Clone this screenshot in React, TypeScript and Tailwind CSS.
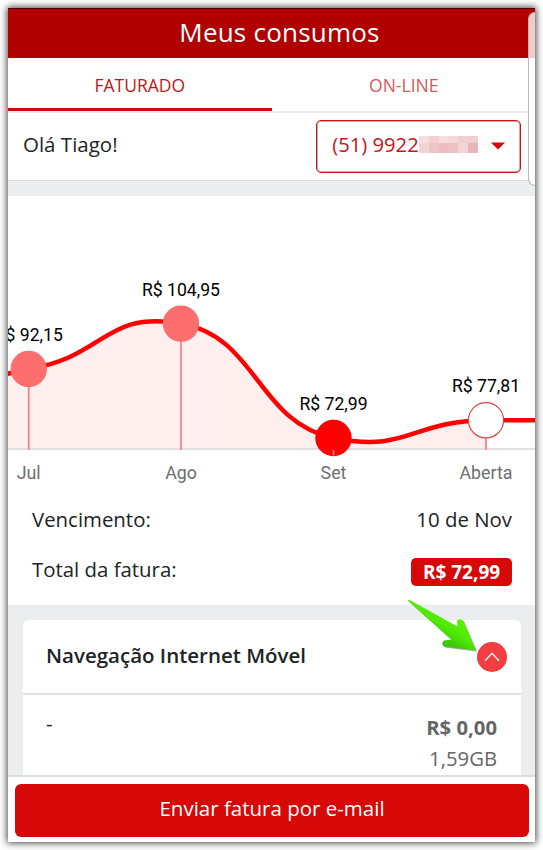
import clsx from 'clsx'

const BASELINE = 253

const points = [
  { month: 'Jul', label: 'R$ 92,15', x: 20.7, y: 173, fill: '#FF6E6E', stroke: '#FF6E6E' },
  { month: 'Ago', label: 'R$ 104,95', x: 173, y: 127.6, fill: '#FF6E6E', stroke: '#FF6E6E' },
  { month: 'Set', label: 'R$ 72,99', x: 325.5, y: 242, fill: '#FF0000', stroke: '#FF0000' },
  { month: 'Aberta', label: 'R$ 77,81', x: 478, y: 224.3, fill: '#FFFFFF', stroke: '#D94545' }
]

const curve =
  'M-40 183 C-20 182 0 178 20.7 173 C97 161 97 114 173 127.6 C249 140.5 249 226 325.5 242 C401.5 257 401.5 225 478 224.3'

// Tints of the cells that hide the end of the phone number
const maskColors = [
  'bg-[#f5dcdd]', 'bg-[#f2d0d1]', 'bg-[#f5dcdd]', 'bg-[#f3d6d7]', 'bg-[#f1cfd1]', 'bg-[#f1cdd0]',
  'bg-[#f3d4d6]', 'bg-[#efc4c7]', 'bg-[#edbcbf]', 'bg-[#edc0c3]', 'bg-[#f3d5d7]', 'bg-[#ebb4b6]'
]

function Header() {
  return (
    <header className="h-[50px] shrink-0 bg-[#b00000] border-t border-[#4a0000] flex items-center justify-center">
      <h1 className="text-[26px] leading-none text-white tracking-[0.22px] pl-4 pb-[3px]">Meus consumos</h1>
    </header>
  )
}

function Tab({ name, active }: { name: string; active?: boolean }) {
  return (
    <button
      className={clsx(
        'w-1/2 h-[53px] pt-1 text-[17.5px] border-b-[3px]',
        active ? 'text-[#c01818] border-[#cc0a0a]' : 'text-[#d45a5a] border-transparent pl-px'
      )}
    >
      {name}
    </button>
  )
}

function Tabs() {
  return (
    <nav className="h-[55px] shrink-0 flex border-b-2 border-[#eeeeee]">
      <Tab name="FATURADO" active />
      <Tab name="ON-LINE" />
    </nav>
  )
}

function Greeting() {
  return (
    <section className="h-[68px] shrink-0 pl-[15px] pr-[14px] flex items-center justify-between border-b border-[#dddddd]">
      <span className="text-[20.5px] pb-[4px]">Olá Tiago!</span>
      <button className="w-[205px] h-[53px] mb-px px-[15px] border border-[#c01818] shadow-[inset_0_0_0_1px_rgba(192,24,24,0.4)] rounded-[5px] flex items-center text-[20.2px] text-[#c01818]">
        <span className="pb-[3px] w-[87px] whitespace-nowrap">(51) 9922</span>
        <span className="grid grid-cols-6 grid-rows-[7px_10px] w-[59px] h-[17px] mb-[4px]">
          {maskColors.map((color, i) => (
            <span key={i} className={color} />
          ))}
        </span>
        <svg className="ml-auto" width="14" height="8" viewBox="0 0 14 8">
          <path d="M0 0.5H14L7 7.5Z" fill="#D60808" />
        </svg>
      </button>
    </section>
  )
}

function ConsumptionChart() {
  return (
    <svg className="block shrink-0" width="527" height="292" viewBox="0 0 527 292" fontFamily="Roboto">
      {/* Filled area and baseline */}
      <path d={`${curve} V${BASELINE} H-40 Z`} fill="#FFEFEE" />
      <path d={`M0 ${BASELINE}H527`} stroke="#E1DFDF" strokeWidth="2" />

      {/* Stems */}
      {points.map((p) => (
        <path key={p.month} d={`M${p.x} ${p.y}V254`} stroke="#F98080" strokeWidth="1.8" />
      ))}

      <path d={`${curve} H527`} fill="none" stroke="#FF0000" strokeWidth="4.5" />

      {/* Markers and labels */}
      {points.map((p) => (
        <g key={p.month} textAnchor="middle">
          <circle cx={p.x} cy={p.y} r="17.6" fill={p.fill} stroke={p.stroke} strokeWidth="1.2" />
          <text x={p.x} y={p.y - 28} fontSize="17.6" fill="#000000">{p.label}</text>
          <text x={p.x} y="283" fontSize="17.8" fill="#6E6E6E">{p.month}</text>
        </g>
      ))}
      <path d="M325.5 254V259.5" stroke="#FF8A8A" strokeWidth="1.6" />
    </svg>
  )
}

function Summary() {
  return (
    <section className="h-[117px] shrink-0 pl-[24px] pr-[23px] pt-[6px] text-[20.4px] leading-[50px]">
      <div className="flex justify-between h-[50px]">
        <span>Vencimento:</span>
        <span>10 de Nov</span>
      </div>
      <div className="flex justify-between items-center h-[50px]">
        <span>Total da fatura:</span>
        <span className="w-[101px] h-7 mt-[6px] rounded-[5px] bg-[#d60808] text-white text-center text-[19px] leading-[28px] font-bold">
          R$ 72,99
        </span>
      </div>
    </section>
  )
}

function DataCard() {
  return (
    <div className="h-[170px] shrink-0 bg-[#ecedef] pl-[15px] pr-[14px] pt-[15px]">
      <div className="relative h-[155px] bg-white rounded-t-[5px]">
        <div className="h-[75px] pl-[23px] pr-[14px] flex items-center justify-between border-b-2 border-[#e1e1e3]">
          <h2 className="text-[20.5px] font-semibold pb-[2px]">Navegação Internet Móvel</h2>
          <button className="size-[30px] rounded-full bg-[#f23d41] flex items-center justify-center">
            <svg width="16" height="10" viewBox="0 0 16 10" fill="none">
              <path d="M1 8.7L8 1.3L15 8.7" stroke="#FFFFFF" strokeWidth="1.3" />
            </svg>
          </button>
        </div>
        <div className="flex justify-between pl-[23px] pr-[24px] pt-[17px] text-[20.3px] leading-[31px]">
          <span className="-mt-[4px]">-</span>
          <div className="text-right text-[#666666]">
            <p className="font-bold">R$ 0,00</p>
            <p>1,59GB</p>
          </div>
        </div>

        {/* Pointer over the collapse button */}
        <svg className="absolute left-[382px] top-[-23px]" width="76" height="60" viewBox="0 0 76 60">
          <defs>
            <linearGradient id="arrow" x1="0.35" y1="0.65" x2="0.6" y2="0.35">
              <stop offset="0" stopColor="#3BC808" />
              <stop offset="0.55" stopColor="#4FE904" />
              <stop offset="1" stopColor="#58F205" />
            </linearGradient>
          </defs>
          <path
            d="M3.5 4.2C2.5 3 4 2.6 5.5 3.4L52.5 29.4L52 24.5C52 21.4 57 21.4 58.5 24.5L71 53.5L40.5 49.8C36 49 36.5 43.5 40.5 43.3L46.5 42.8Z"
            transform="translate(1 1)"
            fill="#85858A"
            opacity="0.75"
          />
          <path
            d="M3.5 4.2C2.5 3 4 2.6 5.5 3.4L52.5 29.4L52 24.5C52 21.4 57 21.4 58.5 24.5L71 53.5L40.5 49.8C36 49 36.5 43.5 40.5 43.3L46.5 42.8Z"
            fill="url(#arrow)"
          />
        </svg>
      </div>
    </div>
  )
}

function Footer() {
  return (
    <footer className="h-[67px] shrink-0 border-t-2 border-[#dcdddf] bg-white pt-[7px] pl-[7px] pr-[6px]">
      <button className="w-full h-[53px] pb-[4px] rounded-[6px] bg-[#d60808] text-[20.5px] text-white">
        Enviar fatura por e-mail
      </button>
    </footer>
  )
}

export default function App() {
  return (
    <div className="w-[543px] h-[850px] bg-white p-2 overflow-hidden">
      <main className="relative w-[527px] h-[834px] flex flex-col bg-white text-[#212325] font-['Open_Sans',sans-serif] shadow-[0_0_7px_1px_rgba(0,0,0,0.75)]">
        <Header />
        <Tabs />
        <Greeting />
        <div className="h-[15px] shrink-0 bg-[#ecedef]" />
        <ConsumptionChart />
        <Summary />
        <DataCard />
        <Footer />
        {/* Edge panel handle */}
        <div className="absolute right-0 top-[4px] w-[7px] h-[174px] rounded-l-[8px] border border-r-0 border-[#b9b9b9] bg-white/80" />
      </main>
    </div>
  )
}
